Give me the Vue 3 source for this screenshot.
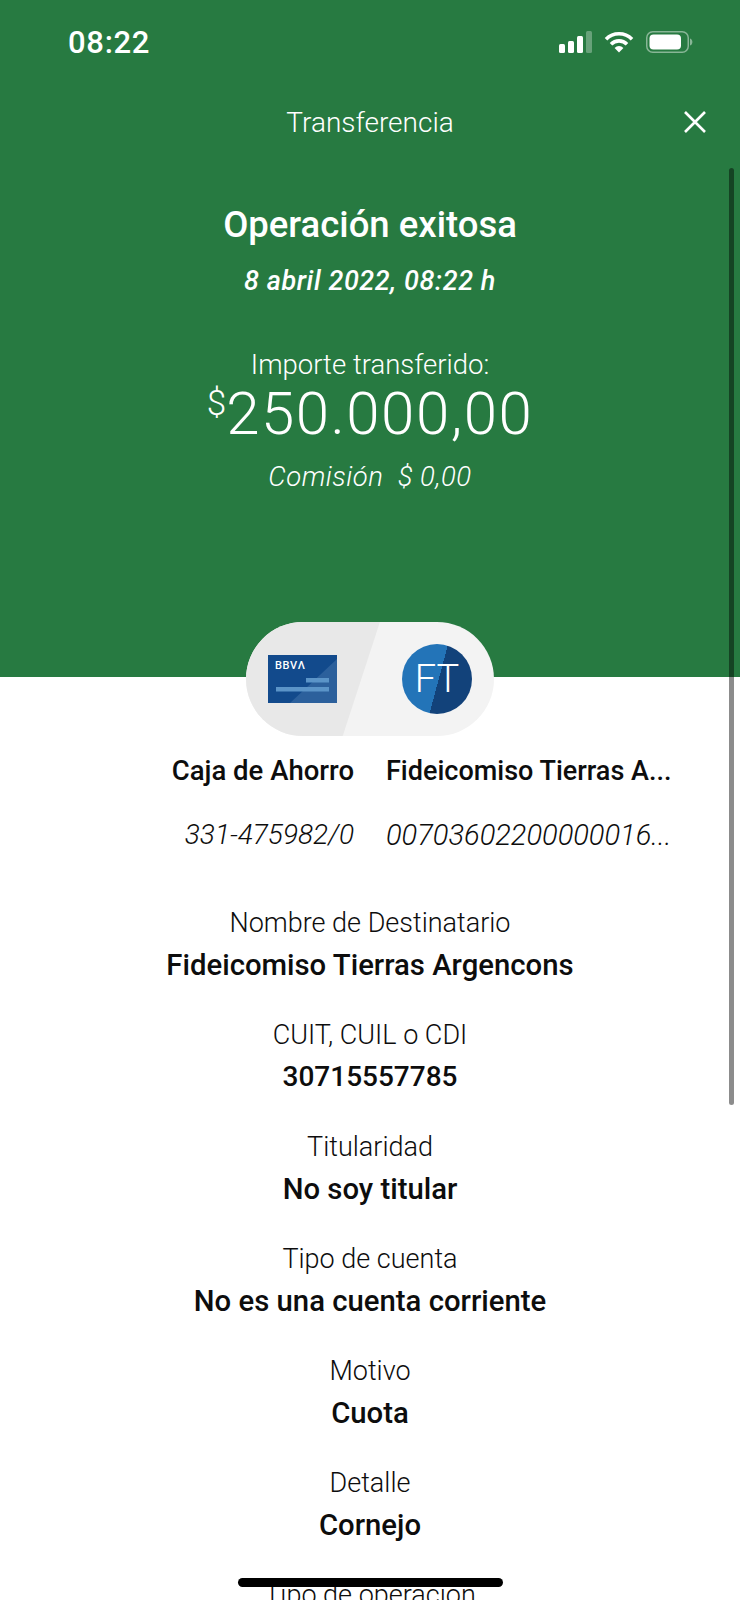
<script setup>
const details = [
  { label: 'Nombre de Destinatario', value: 'Fideicomiso Tierras Argencons' },
  { label: 'CUIT, CUIL o CDI', value: '30715557785', numeric: true },
  { label: 'Titularidad', value: 'No soy titular' },
  { label: 'Tipo de cuenta', value: 'No es una cuenta corriente' },
  { label: 'Motivo', value: 'Cuota' },
  { label: 'Detalle', value: 'Cornejo' },
  { label: 'Tipo de operación', value: 'Transferencia' },
]
</script>

<template>
  <main class="screen">
    <section class="hero">
      <div class="status">
        <span class="clock">08:22</span>
        <div class="status-icons">
          <svg width="34" height="22" viewBox="0 0 34 22">
            <rect x="1" y="13" width="6" height="9" rx="1.5" fill="#fff" />
            <rect x="10" y="10" width="6" height="12" rx="1.5" fill="#fff" />
            <rect x="19" y="5" width="6" height="17" rx="1.5" fill="#fff" />
            <rect x="28" y="0" width="6" height="22" rx="1.5" fill="#fff" opacity=".3" />
          </svg>
          <svg width="30" height="22" viewBox="0 0 30 22" fill="none" stroke="#fff" stroke-width="3.6">
            <path d="M2 8.2a18.4 18.4 0 0 1 26 0" />
            <path d="M7 13.2a11.3 11.3 0 0 1 16 0" />
            <path d="M15 21.5l-4.4-4.6a6.2 6.2 0 0 1 8.8 0z" fill="#fff" stroke="none" />
          </svg>
          <svg width="47" height="22" viewBox="0 0 47 22">
            <rect x=".75" y=".75" width="41.5" height="20.5" rx="6" fill="none" stroke="#fff" stroke-opacity=".45" stroke-width="1.5" />
            <rect x="3.5" y="3.5" width="31.5" height="15" rx="4" fill="#fff" />
            <path d="M44 7.5c1.6.5 2.4 2 2.4 3.5s-.8 3-2.4 3.5z" fill="#fff" opacity=".45" />
          </svg>
        </div>
      </div>

      <header class="nav">
        <span class="nav-title">Transferencia</span>
        <svg class="close" width="24" height="24" viewBox="0 0 24 24" fill="none" stroke="#fff" stroke-width="2.6">
          <path d="M2 2l20 20M22 2L2 22" />
        </svg>
      </header>

      <h1 class="result">Operación exitosa</h1>
      <p class="when">8 abril 2022, 08:22 h</p>
      <p class="amount-label">Importe transferido:</p>
      <p class="amount"><sup>$</sup>250.000,00</p>
      <p class="fee">Comisión&nbsp; $ 0,00</p>
    </section>

    <div class="pill">
      <div class="pill-side">
        <svg width="69" height="48" viewBox="0 0 69 48">
          <rect width="69" height="48" fill="#124a8c" />
          <path d="M69 4v44H22z" fill="#3a6ba5" opacity=".65" />
          <rect x="38" y="23" width="23" height="4.5" fill="#5b94c8" />
          <rect x="8" y="32" width="53" height="4.5" fill="#5b94c8" />
          <text x="7" y="14" class="card-brand">BBVΛ</text>
        </svg>
      </div>
      <div class="pill-side">
        <div class="avatar">FT</div>
      </div>
    </div>

    <div class="accounts">
      <div class="account-col from">
        <strong>Caja de Ahorro</strong>
        <em>331-475982/0</em>
      </div>
      <div class="account-col to">
        <strong>Fideicomiso Tierras A...</strong>
        <em>00703602200000016...</em>
      </div>
    </div>

    <dl class="details">
      <div v-for="item in details" :key="item.label" class="row">
        <dt>{{ item.label }}</dt>
        <dd :class="{ numeric: item.numeric }">{{ item.value }}</dd>
      </div>
    </dl>

    <div class="scrollbar"></div>
    <div class="home-bar"></div>
  </main>
</template>

<style>
body {
  background: #fff;
}
</style>

<style scoped>
.screen {
  position: relative;
  width: 740px;
  height: 1600px;
  overflow: hidden;
  background: #fff;
  color: #0d0d0d;
  font-family: Roboto, "Liberation Sans", sans-serif;
}
.hero {
  height: 677px;
  background: #277a41;
  color: #fff;
  text-align: center;
}
.status {
  display: flex;
  justify-content: space-between;
  align-items: center;
  height: 84px;
  padding: 0 47px 0 68px;
}
.clock {
  font-size: 31px;
  letter-spacing: .7px;
  font-weight: 500;
}
.status-icons {
  display: flex;
  align-items: center;
  gap: 12px;
}
.nav {
  position: relative;
  height: 76px;
  padding-top: 1px;
  box-sizing: border-box;
  line-height: 76px;
}
.nav-title {
  font-size: 28px;
  font-weight: 300;
}
.close {
  position: absolute;
  right: 33px;
  top: 26px;
}
.result {
  margin: 40px 0 0;
  font-size: 36.5px;
  line-height: 50px;
  font-weight: 500;
}
.when {
  margin: 11px 0 0;
  font-size: 27px;
  line-height: 40px;
  letter-spacing: .6px;
  font-style: italic;
  font-weight: 500;
}
.amount-label {
  margin: 44px 0 0;
  font-size: 27.5px;
  line-height: 40px;
  font-weight: 300;
}
.amount {
  margin: 0;
  font-size: 60px;
  line-height: 58px;
  letter-spacing: 1.5px;
  font-weight: 300;
}
.amount sup {
  font-size: 35px;
  line-height: 0;
  vertical-align: 19px;
  letter-spacing: 0;
}
.fee {
  margin: 14px 0 0;
  font-size: 27.5px;
  line-height: 40px;
  letter-spacing: .5px;
  font-style: italic;
  font-weight: 300;
}
.pill {
  display: grid;
  grid-template-columns: 1fr 1fr;
  width: 248px;
  height: 114px;
  margin: -55px 0 0 246px;
  border-radius: 57px;
  overflow: hidden;
  background: #f3f3f3;
  position: relative;
}
.pill::before {
  content: "";
  position: absolute;
  inset: 0;
  background: #e8e8e8;
  clip-path: polygon(0 0, 54% 0, 39% 100%, 0 100%);
}
.pill-side {
  position: relative;
  display: flex;
  align-items: center;
  justify-content: center;
}
.pill-side:first-child {
  padding-right: 12px;
}
.pill-side:last-child {
  padding-left: 10px;
}
.card-brand {
  font: 500 11px Roboto, sans-serif;
  letter-spacing: .6px;
  fill: #fff;
}
.avatar {
  width: 70px;
  height: 70px;
  border-radius: 50%;
  background: linear-gradient(105deg, #2374b8 0 52%, #12427a 52%);
  color: #fff;
  font-size: 38px;
  font-weight: 300;
  line-height: 70px;
  text-align: center;
}
.accounts {
  display: grid;
  grid-template-columns: 184px 290px;
  gap: 32px;
  margin: 17px 0 0 170px;
}
.account-col {
  display: flex;
  flex-direction: column;
  gap: 28px;
  white-space: nowrap;
  line-height: 36px;
}
.from {
  text-align: right;
}
.account-col strong {
  font-size: 27px;
  font-weight: 500;
}
.from strong {
  font-size: 27.5px;
}
.account-col em {
  font-weight: 300;
}
.from em {
  font-size: 28px;
}
.to em {
  font-size: 29px;
}
.details {
  margin: 50px 0 0;
  text-align: center;
}
.row {
  height: 112px;
}
.row dt {
  font-size: 27px;
  font-weight: 300;
  line-height: 40px;
}
.row dd {
  margin: 2px 0 0;
  font-size: 29.3px;
  font-weight: 500;
  line-height: 40px;
}
.row dd.numeric {
  font-size: 28px;
}
.scrollbar {
  position: absolute;
  left: 729px;
  top: 168px;
  width: 5px;
  height: 937px;
  border-radius: 2.5px;
  background: rgba(0, 0, 0, .45);
}
.home-bar {
  position: absolute;
  left: 238px;
  top: 1578px;
  width: 265px;
  height: 9px;
  border-radius: 5px;
  background: #000;
}
</style>
